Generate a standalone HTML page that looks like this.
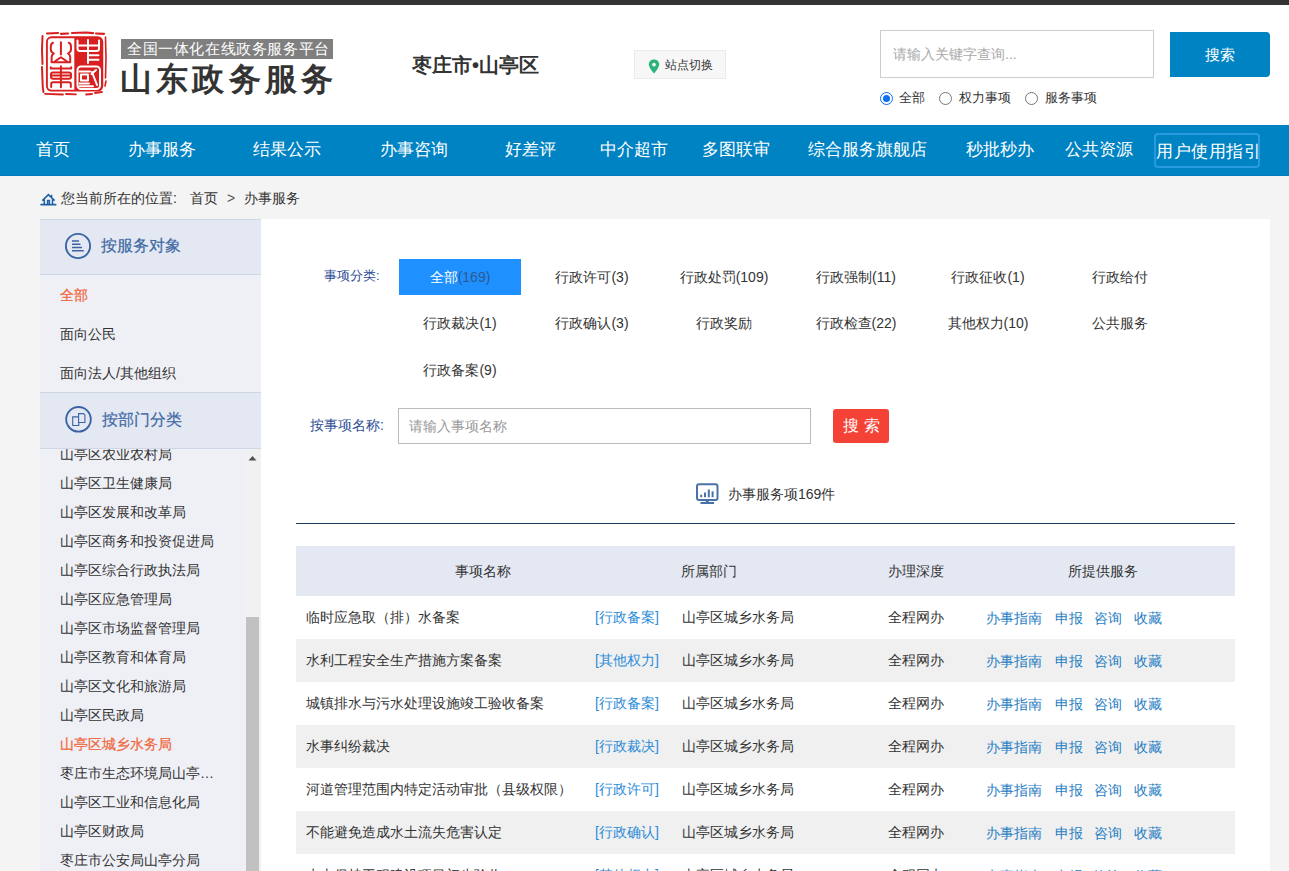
<!DOCTYPE html>
<html><head><meta charset="utf-8">
<style>
*{margin:0;padding:0;box-sizing:border-box}
html,body{width:1289px;height:871px;overflow:hidden;background:#f4f4f4;font-family:"Liberation Sans",sans-serif;color:#333}
.a{position:absolute;white-space:nowrap}
#topbar{left:0;top:0;width:1289px;height:5px;background:#333}
#header{left:0;top:5px;width:1289px;height:120px;background:#fff}
#nav{left:0;top:125px;width:1289px;height:51px;background:#0083c3;border-bottom:1px solid #007ab8}
.nv{top:125px;height:50px;line-height:50px;font-size:17px;color:#fff}
.sb{font-size:14px;color:#333;line-height:20px}
.fl{font-size:14px;color:#333;line-height:20px;width:122px;text-align:center}
.fl span{color:#333}
.row{left:296px;width:939px;height:43px}
.td{font-size:14px;line-height:20px;color:#333}
.ty{color:#2b8cd8}
.sv{color:#1f7dc3}
</style></head><body>
<div class="a" id="topbar"></div>
<div class="a" id="header"></div>

<!-- logo seal -->
<svg class="a" style="left:38px;top:28px" width="72" height="72" viewBox="0 0 72 72">
  <g fill="none" stroke="#d91f1f" stroke-linecap="round">
    <path d="M9 5.5 L20 5 M23 5.8 L30 5.5 M34 5 L48 4.5 L55 5.2 M58 5.5 L66 5.8" stroke-width="2.2"/>
    <path d="M4.5 8 L4 22 L4.5 36 M4 39 L4.8 60 L5.5 64" stroke-width="2"/>
    <path d="M67.5 9 L68 30 L67.5 50 M68 53 L67 58" stroke-width="1.6"/>
    <path d="M7 65.8 L25 66.5 M28 66 L38 66.3 M48 66.5 L54 66 M57 65 L64 64" stroke-width="1.8"/>
    <rect x="8.9" y="9.3" width="55.4" height="53.3" rx="4.5" stroke-width="1.9"/>
  </g>
  <path d="M36.3 9.3 H59.8 A4.5 4.5 0 0 1 64.3 13.8 V58.1 A4.5 4.5 0 0 1 59.8 62.6 H36.3 Z" fill="#d91f1f"/>
  <g fill="none" stroke="#d91f1f" stroke-width="2" stroke-linecap="round" stroke-linejoin="round">
    <path d="M15 14.8 C13 15.5 12.8 17 12.8 19 V21.5 C12.8 23.5 14 24.5 15.8 25.5 C14 26.5 13.6 27.5 13.6 29 V34.2 H32.2 V29 C32.2 27.5 31.8 26.5 30 25.5 C31.8 24.5 33 23.5 33 21.5 V19 C33 17 32.8 15.5 30.8 14.8"/>
    <path d="M22.9 14.3 V26.6 M16.8 33.5 L22.9 29.2 L29 33.5"/>
    <path d="M12.8 39.2 V40.4 H33.2 V39.2 M22.9 38.3 V59.3 M15 44.6 H31 A2 2 0 0 1 33 46.6 V48.8 A2 2 0 0 1 31 50.8 H15 A2 2 0 0 1 13 48.8 V46.6 A2 2 0 0 1 15 44.6 M13.5 47.6 H32.5 M13.2 59 V56 A1.8 1.8 0 0 1 15 54.2 H31 A1.8 1.8 0 0 1 32.8 56 V59"/>
  </g>
  <g fill="none" stroke="#fff" stroke-width="2" stroke-linecap="round" stroke-linejoin="round">
    <path d="M39.5 12.5 V20.5 A2.5 2.5 0 0 0 42 23 H58.5 A2.5 2.5 0 0 0 61 20.5 V12.5 M40 17.6 H60.5 M50 12 V35 M50.5 27.3 H60.5 M50.5 31.8 H60.5"/>
    <rect x="39.5" y="38.5" width="22.5" height="22.5" rx="3.5"/>
    <path d="M41.5 43.5 H52 M43 46.5 H50 V52.5 H43 Z M41.5 55.5 H51 M41.5 58.3 H55 M58 42 L53.5 46 M54 44 L59 57"/>
  </g>
</svg>

<div class="a" style="left:121px;top:39px;width:212px;height:20px;background:#7f7f7f"></div>
<div class="a" style="left:127px;top:39px;font-size:15px;line-height:20px;color:#fff;letter-spacing:0.6px">全国一体化在线政务服务平台</div>
<div class="a" style="left:120px;top:60px;font-size:32px;line-height:38px;color:#333;font-weight:bold;letter-spacing:4.2px">山东政务服务</div>

<div class="a" style="left:412px;top:53px;font-size:20px;line-height:24px;color:#333;font-weight:bold">枣庄市•山亭区</div>

<div class="a" style="left:634px;top:50px;width:92px;height:29px;background:#f7f7f7;border:1px solid #ebebeb"></div>
<svg class="a" style="left:648px;top:59px" width="12" height="16" viewBox="0 0 12 16">
  <path d="M6 0.5 C2.8 0.5 0.8 2.8 0.8 5.6 C0.8 9 6 14.5 6 14.5 C6 14.5 11.2 9 11.2 5.6 C11.2 2.8 9.2 0.5 6 0.5 Z" fill="#2db37a"/>
  <circle cx="6" cy="5.6" r="1.9" fill="#f7f7f7"/>
</svg>
<div class="a" style="left:665px;top:57px;font-size:12px;line-height:17px;color:#333">站点切换</div>

<!-- search -->
<div class="a" style="left:880px;top:30px;width:274px;height:48px;background:#fff;border:1px solid #ccc"></div>
<div class="a" style="left:893px;top:44px;font-size:14px;line-height:20px;color:#a9a9a9">请输入关键字查询...</div>
<div class="a" style="left:1170px;top:32px;width:100px;height:45px;background:#0083c3;border-radius:0 4px 4px 0"></div>
<div class="a" style="left:1170px;top:32px;width:100px;height:45px;line-height:45px;text-align:center;font-size:15px;color:#fff">搜索</div>

<!-- radios -->
<div class="a" style="left:880px;top:92px;width:13px;height:13px;border-radius:50%;border:1.6px solid #0a6ff0;background:#fff"></div>
<div class="a" style="left:883px;top:95px;width:7px;height:7px;border-radius:50%;background:#0a6ff0"></div>
<div class="a" style="left:899px;top:88px;font-size:13px;line-height:19px;color:#333">全部</div>
<div class="a" style="left:939px;top:92px;width:13px;height:13px;border-radius:50%;border:1px solid #767676;background:#fff"></div>
<div class="a" style="left:959px;top:88px;font-size:13px;line-height:19px;color:#333">权力事项</div>
<div class="a" style="left:1025px;top:92px;width:13px;height:13px;border-radius:50%;border:1px solid #767676;background:#fff"></div>
<div class="a" style="left:1045px;top:88px;font-size:13px;line-height:19px;color:#333">服务事项</div>

<!-- nav -->
<div class="a" id="nav"></div>
<div class="a nv" style="left:36px">首页</div>
<div class="a nv" style="left:128px">办事服务</div>
<div class="a nv" style="left:253px">结果公示</div>
<div class="a nv" style="left:380px">办事咨询</div>
<div class="a nv" style="left:505px">好差评</div>
<div class="a nv" style="left:600px">中介超市</div>
<div class="a nv" style="left:702px">多图联审</div>
<div class="a nv" style="left:808px">综合服务旗舰店</div>
<div class="a nv" style="left:966px">秒批秒办</div>
<div class="a nv" style="left:1065px">公共资源</div>
<div class="a" style="left:1154px;top:133px;width:106px;height:35px;border:2px solid #2a9ae0;border-radius:4px"></div>
<div class="a nv" style="left:1156px;top:127px;letter-spacing:0.5px">用户使用指引</div>

<!-- breadcrumb -->
<svg class="a" style="left:36px;top:186px" width="24" height="22" viewBox="0 0 24 22">
  <path d="M6.3 14.6 L12.4 8.6 L18.6 14.6 M15.6 8.8 V11.8 M8.3 13 V18.3 M16.5 13 V18.3 M11.6 18.3 V14.6 H13.4 V18.3" fill="none" stroke="#1f5fa3" stroke-width="1.5"/>
  <path d="M5 18.6 H19.8" stroke="#1f5fa3" stroke-width="1.6" stroke-linecap="round"/>
</svg>
<div class="a" style="left:61px;top:188px;font-size:14px;line-height:20px;color:#333">您当前所在的位置: </div>
<div class="a" style="left:190px;top:188px;font-size:14px;line-height:20px;color:#333">首页</div>
<div class="a" style="left:227px;top:188px;font-size:14px;line-height:20px;color:#555">&gt;</div>
<div class="a" style="left:244px;top:188px;font-size:14px;line-height:20px;color:#333">办事服务</div>

<!-- sidebar -->
<div class="a" id="sidebar" style="left:40px;top:219px;width:221px;height:652px;background:#eff0f6"></div>
<div class="a" style="left:40px;top:219px;width:221px;height:56px;background:#e3e8f2;border-top:1px solid #cfd7e6;border-bottom:1px solid #cfd7e6"></div>
<svg class="a" style="left:64px;top:232px" width="28" height="28" viewBox="0 0 28 28">
  <circle cx="14" cy="14" r="12.1" fill="none" stroke="#3a64a4" stroke-width="1.9"/>
  <path d="M8 9 H15 M8 12.3 H16.5 M8 15.5 H18 M8 18.7 H19.8" stroke="#3a64a4" stroke-width="1.5"/>
</svg>
<div class="a" style="left:101px;top:235px;font-size:16px;line-height:22px;color:#3f69a4;-webkit-text-stroke:0.2px #3f69a4">按服务对象</div>
<div class="a sb" style="left:60px;top:285px;color:#f0683f;-webkit-text-stroke:0.25px #f0683f">全部</div>
<div class="a sb" style="left:60px;top:324px">面向公民</div>
<div class="a sb" style="left:60px;top:363px">面向法人/其他组织</div>

<div class="a" style="left:40px;top:392px;width:221px;height:57px;background:#e3e8f2;border-top:1px solid #cfd7e6;border-bottom:1px solid #cfd7e6"></div>
<svg class="a" style="left:64px;top:405px" width="28" height="28" viewBox="0 0 28 28">
  <circle cx="14.5" cy="14.3" r="12.3" fill="none" stroke="#3a64a4" stroke-width="1.9"/>
  <path d="M8.7 11.9 H14.8 V20.5 H8.7 Z" fill="none" stroke="#3a64a4" stroke-width="1.1"/>
  <path d="M14.6 8.6 H19.6 L20.9 9.9 V17.5 H14.6 Z" fill="#e3e8f2" stroke="#3a64a4" stroke-width="1.1"/>
</svg>
<div class="a" style="left:102px;top:409px;font-size:16px;line-height:22px;color:#3f69a4;-webkit-text-stroke:0.2px #3f69a4">按部门分类</div>

<div class="a" style="left:40px;top:449px;width:221px;height:422px;overflow:hidden">
  <div class="a" style="left:205px;top:0;width:16px;height:422px;background:#f1f1f1"></div>
  <div class="a" style="left:206px;top:168px;width:13px;height:260px;background:#c1c1c1"></div>
  <svg class="a" style="left:208px;top:6px" width="9" height="6" viewBox="0 0 9 6"><path d="M0.5 5.5 L4.5 1 L8.5 5.5 Z" fill="#505050"/></svg>
  <div class="a sb" style="left:20px;top:-5px">山亭区农业农村局</div>
  <div class="a sb" style="left:20px;top:24px">山亭区卫生健康局</div>
  <div class="a sb" style="left:20px;top:53px">山亭区发展和改革局</div>
  <div class="a sb" style="left:20px;top:82px">山亭区商务和投资促进局</div>
  <div class="a sb" style="left:20px;top:111px">山亭区综合行政执法局</div>
  <div class="a sb" style="left:20px;top:140px">山亭区应急管理局</div>
  <div class="a sb" style="left:20px;top:169px">山亭区市场监督管理局</div>
  <div class="a sb" style="left:20px;top:198px">山亭区教育和体育局</div>
  <div class="a sb" style="left:20px;top:227px">山亭区文化和旅游局</div>
  <div class="a sb" style="left:20px;top:256px">山亭区民政局</div>
  <div class="a sb" style="left:20px;top:285px;color:#f0683f;-webkit-text-stroke:0.25px #f0683f">山亭区城乡水务局</div>
  <div class="a sb" style="left:20px;top:314px">枣庄市生态环境局山亭…</div>
  <div class="a sb" style="left:20px;top:343px">山亭区工业和信息化局</div>
  <div class="a sb" style="left:20px;top:372px">山亭区财政局</div>
  <div class="a sb" style="left:20px;top:401px">枣庄市公安局山亭分局</div>
</div>

<!-- content -->
<div class="a" id="content" style="left:261px;top:219px;width:1009px;height:652px;background:#fff"></div>
<div class="a" style="left:324px;top:266px;font-size:13px;line-height:20px;color:#2d4e96">事项分类:</div>
<div class="a" style="left:399px;top:259px;width:122px;height:36px;background:#1e90ff"></div>
<div class="a fl" style="left:399px;top:267px;color:#fff">全部<span style="color:#2d5a94">(169)</span></div>
<div class="a fl" style="left:531px;top:267px">行政许可(3)</div>
<div class="a fl" style="left:663px;top:267px">行政处罚(109)</div>
<div class="a fl" style="left:795px;top:267px">行政强制(11)</div>
<div class="a fl" style="left:927px;top:267px">行政征收(1)</div>
<div class="a fl" style="left:1059px;top:267px">行政给付</div>
<div class="a fl" style="left:399px;top:313px">行政裁决(1)</div>
<div class="a fl" style="left:531px;top:313px">行政确认(3)</div>
<div class="a fl" style="left:663px;top:313px">行政奖励</div>
<div class="a fl" style="left:795px;top:313px">行政检查(22)</div>
<div class="a fl" style="left:927px;top:313px">其他权力(10)</div>
<div class="a fl" style="left:1059px;top:313px">公共服务</div>
<div class="a fl" style="left:399px;top:360px">行政备案(9)</div>

<div class="a" style="left:310px;top:415px;font-size:14px;line-height:20px;color:#2d4e96">按事项名称:</div>
<div class="a" style="left:398px;top:408px;width:413px;height:36px;border:1px solid #bbb;background:#fff"></div>
<div class="a" style="left:409px;top:416px;font-size:14px;line-height:20px;color:#999">请输入事项名称</div>
<div class="a" style="left:833px;top:409px;width:56px;height:34px;background:#f44336;border-radius:3px;color:#fff;font-size:16px;line-height:34px;text-align:center;letter-spacing:5px;padding-left:5px">搜索</div>

<svg class="a" style="left:696px;top:483px" width="23" height="22" viewBox="0 0 23 22">
  <rect x="1" y="1.3" width="20.5" height="15.8" rx="2" fill="none" stroke="#4a72a8" stroke-width="2"/>
  <rect x="9.8" y="17" width="3" height="3" fill="#4a72a8"/>
  <rect x="4.5" y="19" width="13.5" height="2" fill="#4a72a8"/>
  <path d="M5.2 11.8 V14.3 M9 9.5 V14.3 M12.8 6.5 V14.3 M16.6 8.3 V14.3" stroke="#4a72a8" stroke-width="2"/>
</svg>
<div class="a" style="left:728px;top:484px;font-size:14px;line-height:20px;color:#333">办事服务项169件</div>
<div class="a" style="left:296px;top:523px;width:939px;height:1px;background:#1d3d5c"></div>

<!-- table -->
<div class="a" style="left:296px;top:546px;width:939px;height:50px;background:#e3e8f2"></div>
<div class="a td" style="left:455px;top:561px">事项名称</div>
<div class="a td" style="left:681px;top:561px">所属部门</div>
<div class="a td" style="left:888px;top:561px">办理深度</div>
<div class="a td" style="left:1068px;top:561px">所提供服务</div>

<div class="a row" style="top:596px;background:#fff"></div>
<div class="a td" style="left:306px;top:607px">临时应急取（排）水备案</div>
<div class="a td ty" style="left:595px;top:607px">[行政备案]</div>
<div class="a td" style="left:682px;top:607px">山亭区城乡水务局</div>
<div class="a td" style="left:888px;top:607px">全程网办</div>
<div class="a td sv" style="left:986px;top:608px">办事指南</div>
<div class="a td sv" style="left:1055px;top:608px">申报</div>
<div class="a td sv" style="left:1094px;top:608px">咨询</div>
<div class="a td sv" style="left:1134px;top:608px">收藏</div>
<div class="a row" style="top:639px;background:#f0f0f0"></div>
<div class="a td" style="left:306px;top:650px">水利工程安全生产措施方案备案</div>
<div class="a td ty" style="left:595px;top:650px">[其他权力]</div>
<div class="a td" style="left:682px;top:650px">山亭区城乡水务局</div>
<div class="a td" style="left:888px;top:650px">全程网办</div>
<div class="a td sv" style="left:986px;top:651px">办事指南</div>
<div class="a td sv" style="left:1055px;top:651px">申报</div>
<div class="a td sv" style="left:1094px;top:651px">咨询</div>
<div class="a td sv" style="left:1134px;top:651px">收藏</div>
<div class="a row" style="top:682px;background:#fff"></div>
<div class="a td" style="left:306px;top:693px">城镇排水与污水处理设施竣工验收备案</div>
<div class="a td ty" style="left:595px;top:693px">[行政备案]</div>
<div class="a td" style="left:682px;top:693px">山亭区城乡水务局</div>
<div class="a td" style="left:888px;top:693px">全程网办</div>
<div class="a td sv" style="left:986px;top:694px">办事指南</div>
<div class="a td sv" style="left:1055px;top:694px">申报</div>
<div class="a td sv" style="left:1094px;top:694px">咨询</div>
<div class="a td sv" style="left:1134px;top:694px">收藏</div>
<div class="a row" style="top:725px;background:#f0f0f0"></div>
<div class="a td" style="left:306px;top:736px">水事纠纷裁决</div>
<div class="a td ty" style="left:595px;top:736px">[行政裁决]</div>
<div class="a td" style="left:682px;top:736px">山亭区城乡水务局</div>
<div class="a td" style="left:888px;top:736px">全程网办</div>
<div class="a td sv" style="left:986px;top:737px">办事指南</div>
<div class="a td sv" style="left:1055px;top:737px">申报</div>
<div class="a td sv" style="left:1094px;top:737px">咨询</div>
<div class="a td sv" style="left:1134px;top:737px">收藏</div>
<div class="a row" style="top:768px;background:#fff"></div>
<div class="a td" style="left:306px;top:779px">河道管理范围内特定活动审批（县级权限）</div>
<div class="a td ty" style="left:595px;top:779px">[行政许可]</div>
<div class="a td" style="left:682px;top:779px">山亭区城乡水务局</div>
<div class="a td" style="left:888px;top:779px">全程网办</div>
<div class="a td sv" style="left:986px;top:780px">办事指南</div>
<div class="a td sv" style="left:1055px;top:780px">申报</div>
<div class="a td sv" style="left:1094px;top:780px">咨询</div>
<div class="a td sv" style="left:1134px;top:780px">收藏</div>
<div class="a row" style="top:811px;background:#f0f0f0"></div>
<div class="a td" style="left:306px;top:822px">不能避免造成水土流失危害认定</div>
<div class="a td ty" style="left:595px;top:822px">[行政确认]</div>
<div class="a td" style="left:682px;top:822px">山亭区城乡水务局</div>
<div class="a td" style="left:888px;top:822px">全程网办</div>
<div class="a td sv" style="left:986px;top:823px">办事指南</div>
<div class="a td sv" style="left:1055px;top:823px">申报</div>
<div class="a td sv" style="left:1094px;top:823px">咨询</div>
<div class="a td sv" style="left:1134px;top:823px">收藏</div>
<div class="a row" style="top:854px;background:#fff"></div>
<div class="a td" style="left:306px;top:865px">水土保持工程建设项目初步验收</div>
<div class="a td ty" style="left:595px;top:865px">[其他权力]</div>
<div class="a td" style="left:682px;top:865px">山亭区城乡水务局</div>
<div class="a td" style="left:888px;top:865px">全程网办</div>
<div class="a td sv" style="left:986px;top:866px">办事指南</div>
<div class="a td sv" style="left:1055px;top:866px">申报</div>
<div class="a td sv" style="left:1094px;top:866px">咨询</div>
<div class="a td sv" style="left:1134px;top:866px">收藏</div>
</body></html>
